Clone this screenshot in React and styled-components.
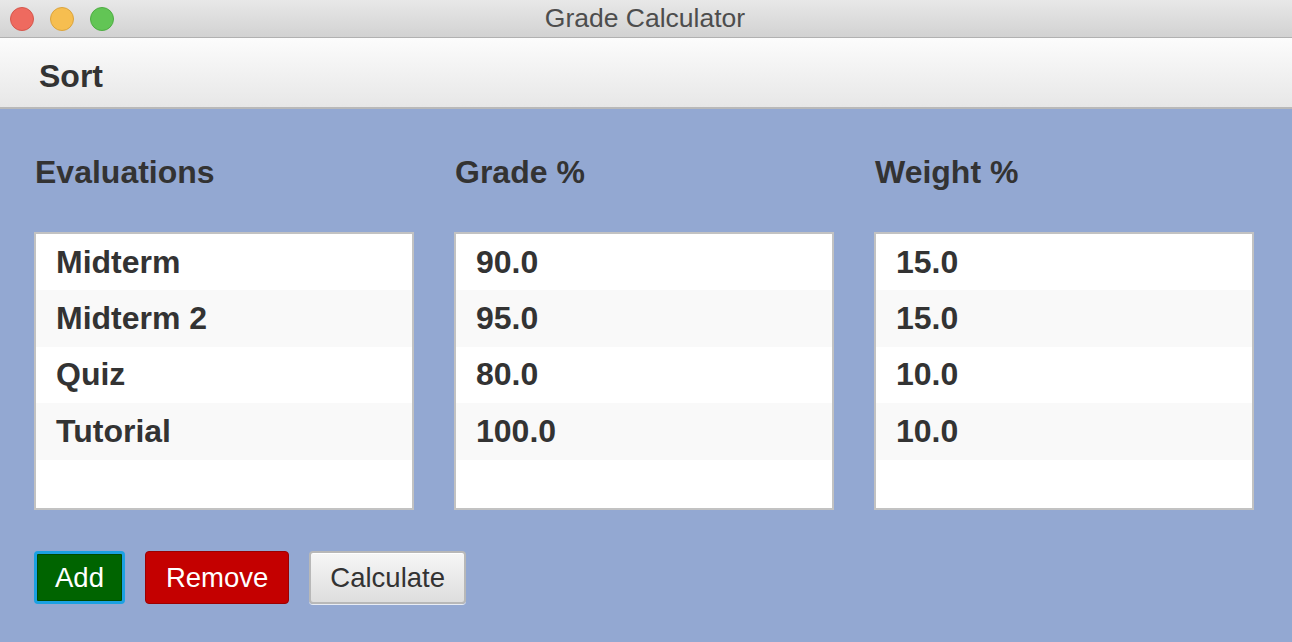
import React from "react";
import styled, { createGlobalStyle } from "styled-components";

const GlobalStyle = createGlobalStyle`
  html, body {
    margin: 0;
    padding: 0;
    background: #93a8d2;
  }
  body {
    font-family: "Liberation Sans", Arial, sans-serif;
    color: #333333;
  }
`;

const evaluations = [
  { name: "Midterm", grade: "90.0", weight: "15.0" },
  { name: "Midterm 2", grade: "95.0", weight: "15.0" },
  { name: "Quiz", grade: "80.0", weight: "10.0" },
  { name: "Tutorial", grade: "100.0", weight: "10.0" },
];

const Window = styled.div`
  width: 1292px;
  height: 642px;
  display: flex;
  flex-direction: column;
  overflow: hidden;
`;

const TitleBar = styled.div`
  height: 37px;
  flex-shrink: 0;
  display: grid;
  grid-template-columns: 1fr auto 1fr;
  align-items: center;
  background: linear-gradient(#e8e8e8, #d2d2d2);
  border-bottom: 1px solid #b1b1b1;
`;

const Lights = styled.div`
  display: flex;
  gap: 16px;
  padding-left: 10px;
`;

const Light = styled.span`
  width: 22px;
  height: 22px;
  border-radius: 50%;
  background: ${(p) => p.color};
  border: 1px solid ${(p) => p.edge};
`;

const Title = styled.div`
  font-size: 26.5px;
  color: #4d4d4d;
  padding-right: 2px;
`;

const MenuBar = styled.div`
  height: 69px;
  flex-shrink: 0;
  display: flex;
  align-items: center;
  padding-left: 39px;
  background: linear-gradient(#fcfcfc, #e7e7e7);
  border-bottom: 2px solid #b9b9b9;
`;

const MenuItem = styled.span`
  font-size: 32px;
  font-weight: bold;
  color: #333333;
  padding-top: 8px;
`;

const Main = styled.div`
  flex: 1;
  background: #93a8d2;
  padding: 42px 38px 0 34px;
`;

const Columns = styled.div`
  display: grid;
  grid-template-columns: repeat(3, 380px);
  column-gap: 40px;
`;

const Column = styled.div`
  display: flex;
  flex-direction: column;
`;

const Heading = styled.div`
  font-size: 32px;
  font-weight: bold;
  line-height: 40px;
  height: 40px;
  padding-left: 1px;
  padding-top: 1px;
  margin-bottom: 40px;
`;

const List = styled.div`
  height: 274px;
  background: #ffffff;
  border: 2px solid #c2c2c2;
  display: flex;
  flex-direction: column;
  padding-top: 0;
`;

const Row = styled.div`
  height: 56.4px;
  flex-shrink: 0;
  display: flex;
  align-items: center;
  padding-left: 20px;
  font-size: 32px;
  font-weight: bold;
  background: ${(p) => (p.odd ? "#f9f9f9" : "#ffffff")};
`;

const Actions = styled.div`
  display: flex;
  gap: 20px;
  margin-top: 41px;
`;

const Button = styled.button`
  height: 53px;
  padding: 0 ${(p) => p.pad || 20}px;
  font-family: "Liberation Sans", Arial, sans-serif;
  font-size: 27.5px;
  border-radius: 4px;
  cursor: pointer;
  color: ${(p) => (p.kind === "plain" ? "#333333" : "#ffffff")};
  background: ${(p) =>
    p.kind === "add"
      ? "#006400"
      : p.kind === "remove"
      ? "#c40000"
      : "linear-gradient(#f6f6f6, #dedede)"};
  border: ${(p) =>
    p.kind === "add"
      ? "3px solid #1ba1e2"
      : p.kind === "remove"
      ? "1px solid #9c0000"
      : "2px solid #b8b8b8"};
  box-shadow: ${(p) =>
    p.kind === "add"
      ? "inset 0 0 0 1px #004a00"
      : p.kind === "plain"
      ? "inset 0 1px 0 #ffffff, 0 1px 0 #e8ecf4"
      : "none"};
`;

const App = () => {
  return (
    <Window>
      <GlobalStyle />
      <TitleBar>
        <Lights>
          <Light color="#ee6a5f" edge="#d5574c" />
          <Light color="#f6be50" edge="#dba43d" />
          <Light color="#62c555" edge="#4ead43" />
        </Lights>
        <Title>Grade Calculator</Title>
        <div />
      </TitleBar>
      <MenuBar>
        <MenuItem>Sort</MenuItem>
      </MenuBar>
      <Main>
        <Columns>
          <Column>
            <Heading>Evaluations</Heading>
            <List>
              {evaluations.map((e, i) => (
                <Row key={e.name} odd={i % 2 === 1}>
                  {e.name}
                </Row>
              ))}
            </List>
          </Column>
          <Column>
            <Heading>Grade %</Heading>
            <List>
              {evaluations.map((e, i) => (
                <Row key={e.name} odd={i % 2 === 1}>
                  {e.grade}
                </Row>
              ))}
            </List>
          </Column>
          <Column>
            <Heading>Weight %</Heading>
            <List>
              {evaluations.map((e, i) => (
                <Row key={e.name} odd={i % 2 === 1}>
                  {e.weight}
                </Row>
              ))}
            </List>
          </Column>
        </Columns>
        <Actions>
          <Button kind="add" pad={18}>Add</Button>
          <Button kind="remove" pad={20}>Remove</Button>
          <Button kind="plain" pad={19}>Calculate</Button>
        </Actions>
      </Main>
    </Window>
  );
};

export default App;
